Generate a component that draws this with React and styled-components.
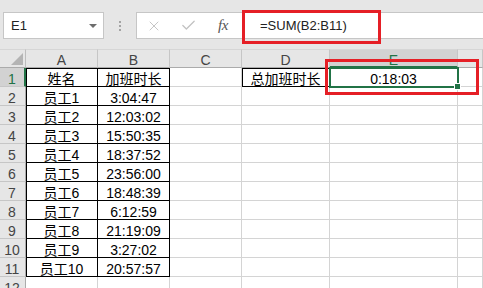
import React from 'react'
import styled, { createGlobalStyle } from 'styled-components'
import { X, Check } from 'lucide-react'

const GRID = '#d4d4d4'
const GREEN = '#217346'
const RED = '#e51f26'

const GlobalStyle = createGlobalStyle`
  html, body {
    margin: 0;
    padding: 0;
    background: #fff;
  }
  body {
    font-family: "Liberation Sans", "Noto Sans CJK SC", sans-serif;
    overflow: hidden;
  }
`

const Window = styled.div`
  position: relative;
  width: 483px;
  height: 288px;
  overflow: hidden;
  background: #fff;
`

// barra de fórmulas
const FormulaRow = styled.div`
  display: flex;
  align-items: flex-start;
  height: 49px;
  box-sizing: border-box;
  padding: 12px 0 0 3px;
  background: #e6e6e6;
`

const NameBox = styled.div`
  box-sizing: border-box;
  width: 101px;
  height: 27px;
  display: flex;
  align-items: center;
  justify-content: space-between;
  padding: 0 6px 0 7px;
  background: #fff;
  border: 1px solid #c6c6c6;
  font-size: 13px;
  color: #222;
`

const Caret = styled.span`
  width: 0;
  height: 0;
  border-left: 4px solid transparent;
  border-right: 4px solid transparent;
  border-top: 4px solid #6d6d6d;
`

const Grip = styled.div`
  width: 32px;
  height: 27px;
  display: flex;
  flex-direction: column;
  align-items: center;
  justify-content: center;
  gap: 2px;

  span {
    width: 2px;
    height: 2px;
    background: #a3a3a3;
  }
`

const FormulaBox = styled.div`
  flex: 1;
  height: 27px;
  box-sizing: border-box;
  display: flex;
  align-items: center;
  background: #fff;
  border: 1px solid #c6c6c6;
  border-right: none;
`

const IconSlot = styled.span`
  width: ${p => p.$w}px;
  display: flex;
  justify-content: center;
  align-items: center;
  color: #c2c2c2;
`

const Fx = styled.span`
  font-family: "Liberation Serif", serif;
  font-style: italic;
  font-size: 15px;
  color: #555;
  letter-spacing: -0.5px;
`

const Formula = styled.span`
  padding-left: 19px;
  font-size: 13px;
  color: #222;
`

// hoja
const Sheet = styled.div`
  display: grid;
  grid-template-columns: 26px 72px 72px 72px 88px 128px 1fr;
  grid-auto-rows: 19px;
  font-size: 14px;
  line-height: 22px;
`

const Corner = styled.div`
  position: relative;
  background: #e6e6e6;
  border-top: 1px solid #d6d6d6;
  border-right: 1px solid #bdbdbd;
  border-bottom: 1px solid #ababab;
  box-sizing: border-box;

  &::after {
    content: '';
    position: absolute;
    right: 2px;
    bottom: 2px;
    width: 12px;
    height: 12px;
    background: #b4b4b4;
    clip-path: polygon(100% 0, 100% 100%, 0 100%);
  }
`

const ColHead = styled.div`
  box-sizing: border-box;
  text-align: center;
  line-height: 20px;
  background: ${p => (p.$active ? '#d2d2d2' : '#e6e6e6')};
  color: ${p => (p.$active ? GREEN : '#444')};
  border-top: 1px solid #d6d6d6;
  border-right: 1px solid #c6c6c6;
  border-bottom: ${p => (p.$active ? `2px solid ${GREEN}` : '1px solid #ababab')};
`

const RowHead = styled.div`
  box-sizing: border-box;
  text-align: center;
  background: ${p => (p.$active ? '#d2d2d2' : '#e6e6e6')};
  color: ${p => (p.$active ? GREEN : '#444')};
  border-right: ${p => (p.$active ? `2px solid ${GREEN}` : '1px solid #ababab')};
  border-bottom: 1px solid #c6c6c6;
  padding-right: ${p => (p.$active ? 0 : 1)}px;
`

const edgeShadow = p => {
  const s = []
  if (p.$left) s.push('inset 1px 0 0 #000')
  if (p.$top) s.push('inset 0 1px 0 #000')
  return s.length ? s.join(', ') : 'none'
}

const Cell = styled.div`
  position: relative;
  box-sizing: border-box;
  text-align: center;
  white-space: nowrap;
  color: #000;
  border-right: 1px solid ${p => (p.$boxed ? '#000' : GRID)};
  border-bottom: 1px solid ${p => (p.$boxed ? '#000' : GRID)};
  box-shadow: ${edgeShadow};

  ${p =>
    p.$selected &&
    `
    z-index: 2;
    &::after {
      content: '';
      position: absolute;
      top: -1px;
      left: -1px;
      right: -2px;
      bottom: -2px;
      border: 2px solid ${GREEN};
    }
    &::before {
      content: '';
      position: absolute;
      right: -4px;
      bottom: -4px;
      width: 5px;
      height: 5px;
      background: ${GREEN};
      border: 1px solid #fff;
      z-index: 3;
    }
  `}
`

const Mark = styled.div`
  position: absolute;
  left: ${p => p.$x}px;
  top: ${p => p.$y}px;
  width: ${p => p.$w}px;
  height: ${p => p.$h}px;
  box-sizing: border-box;
  border: 3px solid ${RED};
  pointer-events: none;
  z-index: 5;
`

const rows = [
  ['姓名', '加班时长'],
  ['员工1', '3:04:47'],
  ['员工2', '12:03:02'],
  ['员工3', '15:50:35'],
  ['员工4', '18:37:52'],
  ['员工5', '23:56:00'],
  ['员工6', '18:48:39'],
  ['员工7', '6:12:59'],
  ['员工8', '21:19:09'],
  ['员工9', '3:27:02'],
  ['员工10', '20:57:57'],
  ['', '']
]

const cols = ['A', 'B', 'C', 'D', 'E', 'F']

export default function App() {
  return (
    <Window>
      <GlobalStyle />
      <FormulaRow>
        <NameBox>
          <span>E1</span>
          <Caret />
        </NameBox>
        <Grip>
          <span />
          <span />
          <span />
        </Grip>
        <FormulaBox>
          <IconSlot $w={34}>
            <X size={16} strokeWidth={1.4} />
          </IconSlot>
          <IconSlot $w={34}>
            <Check size={17} strokeWidth={1.8} />
          </IconSlot>
          <IconSlot $w={36}>
            <Fx>fx</Fx>
          </IconSlot>
          <Formula>=SUM(B2:B11)</Formula>
        </FormulaBox>
      </FormulaRow>

      <Sheet>
        <Corner />
        {cols.map(c => (
          <ColHead key={c} $active={c === 'E'}>{c === 'F' ? '' : c}</ColHead>
        ))}
        {rows.map((r, i) => {
          const n = i + 1
          const inTable = n <= 11
          return (
            <React.Fragment key={n}>
              <RowHead $active={n === 1}>{n}</RowHead>
              <Cell $boxed={inTable} $left={inTable} $top={n === 1}>{r[0]}</Cell>
              <Cell $boxed={inTable} $top={n === 1}>{r[1]}</Cell>
              <Cell />
              <Cell $boxed={n === 1} $left={n === 1} $top={n === 1}>
                {n === 1 ? '总加班时长' : ''}
              </Cell>
              <Cell $selected={n === 1}>{n === 1 ? '0:18:03' : ''}</Cell>
              <Cell />
            </React.Fragment>
          )
        })}
      </Sheet>

      <Mark $x={242} $y={10} $w={139} $h={34} />
      <Mark $x={325} $y={59} $w={154} $h={36} />
    </Window>
  )
}
